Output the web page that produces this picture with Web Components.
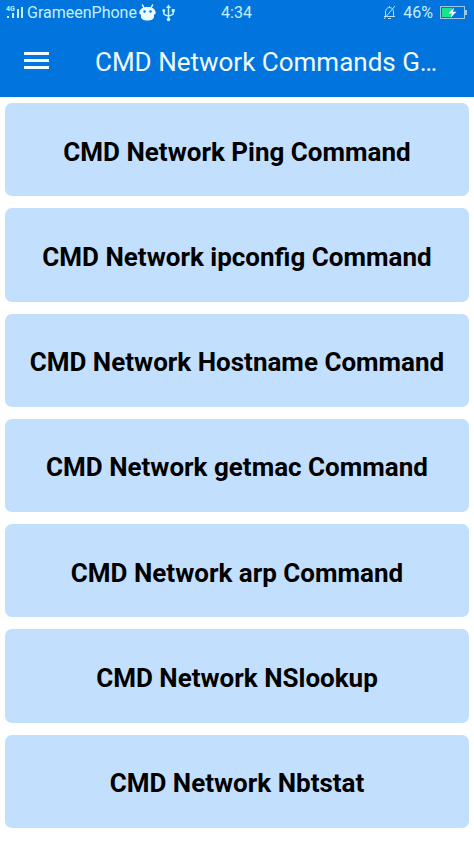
<!DOCTYPE html>
<html lang="en">
<head>
<meta charset="utf-8">
<meta name="viewport" content="width=device-width, initial-scale=1">
<title>CMD Network Commands</title>
<style>
body { margin: 0; font-family: Roboto, "Noto Sans", sans-serif; background: #fff; }
</style>
</head>
<body>
<app-screen>
  <status-bar slot="top" carrier="GrameenPhone" time="4:34" battery="46%"></status-bar>
  <app-bar slot="top">CMD Network Commands G…</app-bar>
  <command-card>CMD Network Ping Command</command-card>
  <command-card>CMD Network ipconfig Command</command-card>
  <command-card>CMD Network Hostname Command</command-card>
  <command-card>CMD Network getmac Command</command-card>
  <command-card>CMD Network arp Command</command-card>
  <command-card>CMD Network NSlookup</command-card>
  <command-card>CMD Network Nbtstat</command-card>
</app-screen>
<script>
class BaseElement extends HTMLElement {
  connectedCallback() {
    if (!this.shadowRoot) this.attachShadow({ mode: "open" }).innerHTML = this.render();
  }
}

customElements.define("app-screen", class extends BaseElement {
  render() {
    return `
      <style>
        :host { display: flex; flex-direction: column; min-height: 100vh; }
        header { background: #0175dd; }
        main { flex: 1; display: grid; grid-auto-rows: 1fr; gap: 12px; padding: 6px 5px 14px; }
      </style>
      <header><slot name="top"></slot></header>
      <main><slot></slot></main>`;
  }
});

customElements.define("status-bar", class extends BaseElement {
  render() {
    return `
      <style>
        :host { display: grid; grid-template-columns: 1fr auto 1fr; align-items: center; height: 25px;
                padding: 0 7px 0 6px; color: #c4f0ff; font-size: 16px; line-height: 25px; }
        div { display: flex; align-items: center; }
        .right { justify-content: flex-end; gap: 7px; }
        .carrier { margin: 0 2px 0 3px; }
        .usb { margin-left: 6px; }
        svg { display: block; flex: none; }
        .net { font-size: 7px; font-weight: 700; fill: #c4f0ff; }
      </style>
      <div>
        <svg width="18" height="18" viewBox="0 0 18 18" fill="#c4f0ff" role="img" aria-label="Signal">
          <text class="net" x="0" y="7">4G</text>
          <rect x="1" y="12" width="2" height="2"/><rect x="6" y="9" width="2" height="5"/>
          <rect x="11" y="5" width="2" height="9"/><rect x="15" y="3" width="2" height="11"/>
        </svg>
        <span class="carrier">${this.getAttribute("carrier")}</span>
        <svg width="17" height="17" viewBox="0 0 17 17" role="img" aria-label="Android debugging">
          <path d="M3.500 1 5 4M13.500 1 12 4" stroke="#eafaff" stroke-width="1.500" stroke-linecap="round"/>
          <path d="M.3 8.500C.8 4.800 4 3 8.500 3s7.700 1.800 8.200 5.500c.2 1.500-.6 2-1.700 1.900v2.100c0 2.600-2.700 4-6.500 4S2 15.100 2 12.500v-2.100C.9 10.500.1 10 .3 8.500z" fill="#eafaff"/>
          <circle cx="5.500" cy="7.500" r="1.200" fill="#0175dd"/><circle cx="11.500" cy="7.500" r="1.200" fill="#0175dd"/>
        </svg>
        <svg class="usb" width="13" height="18" viewBox="0 0 13 18" fill="none" stroke="#c4f0ff" stroke-width="1.500" role="img" aria-label="USB">
          <path d="M6.500 3v12M1.800 7v2.200q0 1.300 1.300 1.700l3.400 1.300 3.400-1.300q1.300-.4 1.300-1.700V6"/>
          <path d="M6.500 .5 9 4H4z" fill="#c4f0ff" stroke="none"/>
          <circle cx="6.500" cy="15.500" r="1.800" fill="#c4f0ff" stroke="none"/>
          <circle cx="1.800" cy="6.500" r="1.500" fill="#c4f0ff" stroke="none"/>
          <path d="M9.700 5h3v3h-3z" fill="#c4f0ff" stroke="none"/>
        </svg>
      </div>
      <span>${this.getAttribute("time")}</span>
      <div class="right">
        <svg width="13" height="15" viewBox="0 0 13 15" fill="none" stroke="#b4e0f8" stroke-width="1" role="img" aria-label="Silent">
          <path d="M1 11.500h11M2.500 11.500V7c0-2.500 1.500-4.500 4-4.500s4 2 4 4.500v4.500M5 13.500h3M6.500 1v1.500M1 14 12 1"/>
        </svg>
        <span>${this.getAttribute("battery")}</span>
        <svg width="27" height="13" viewBox="0 0 27 13" role="img" aria-label="Charging">
          <rect x=".5" y=".5" width="24" height="12" fill="none" stroke="#9dc6e8"/>
          <rect x="2" y="2" width="10" height="9" fill="#16e58e"/>
          <rect x="25" y="4" width="2" height="5" fill="#9dc6e8"/>
          <path d="M14 1.500 8.500 7.500h3.500L10.500 11.800 16.500 5.800H13z" fill="#fff"/>
        </svg>
      </div>`;
  }
});

customElements.define("app-bar", class extends BaseElement {
  render() {
    return `
      <style>
        :host { display: flex; align-items: center; height: 72px; padding: 0 24px; gap: 46px; color: #f0faff; }
        button { display: flex; flex-direction: column; gap: 4px; width: 25px; padding: 0 0 2px; border: 0;
                 background: none; flex: none; cursor: pointer; }
        i { height: 3px; width: 100%; background: #f0faff; }
        h1 { margin: 0; padding-top: 2px; min-width: 0; font-size: 26px; font-weight: 400; line-height: 32px;
             white-space: nowrap; }
      </style>
      <button type="button" aria-label="Open menu"><i></i><i></i><i></i></button>
      <h1><slot></slot></h1>`;
  }
});

customElements.define("command-card", class extends BaseElement {
  render() {
    return `
      <style>
        :host { display: grid; min-height: 64px; }
        button { border: 0; border-radius: 7px; padding: 6px 8px 2px; background: #c2dffd; color: #000;
                 font: 700 26px/32px Roboto, "Noto Sans", sans-serif; text-align: center; cursor: pointer; }
      </style>
      <button type="button"><slot></slot></button>`;
  }
});
</script>
</body>
</html>
